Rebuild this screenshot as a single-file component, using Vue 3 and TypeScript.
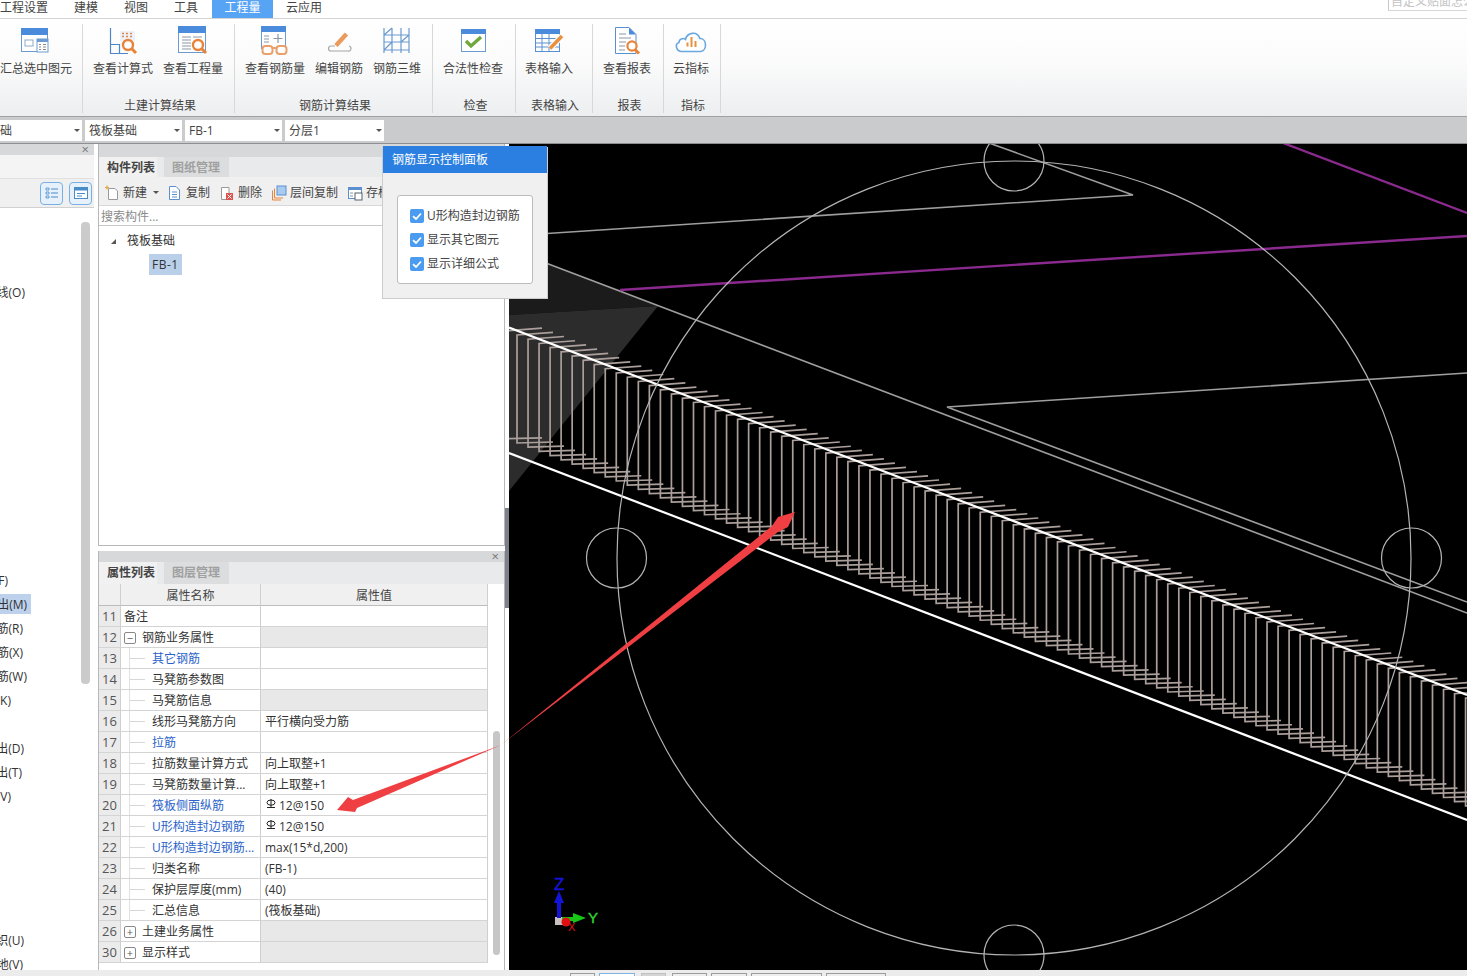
<script setup lang="ts">
import { computed } from 'vue'

const menus = [
  { label: '工程设置', w: 74 },
  { label: '建模', w: 50 },
  { label: '视图', w: 50 },
  { label: '工具', w: 38 },
  { label: '工程量', w: 74, active: true },
  { label: '云应用', w: 60 }
]

const combos = ['基础', '筏板基础', 'FB-1', '分层1']

const sideItems: Record<number, { text: string; end: number; on?: boolean }> = {
  3: { text: '线(O)', end: 25 },
  15: { text: 'F)', end: 8 },
  16: { text: '出(M)', end: 27, on: true },
  17: { text: '筋(R)', end: 23 },
  18: { text: '筋(X)', end: 23 },
  19: { text: '筋(W)', end: 27 },
  20: { text: 'K)', end: 11 },
  22: { text: '出(D)', end: 24 },
  23: { text: '出(T)', end: 22 },
  24: { text: 'V)', end: 11 },
  30: { text: '织(U)', end: 24 },
  31: { text: '地(V)', end: 23 }
}
const sideRows = computed(() => Array.from({ length: 32 }, (_, i) => sideItems[i] ?? null))

interface Row {
  no: number
  name: string
  value?: string
  kind?: 'plain' | 'open' | 'closed' | 'child'
  link?: boolean
  gray?: boolean
  bar?: boolean
}
const rows: Row[] = [
  { no: 11, name: '备注', kind: 'plain' },
  { no: 12, name: '钢筋业务属性', kind: 'open', gray: true },
  { no: 13, name: '其它钢筋', link: true },
  { no: 14, name: '马凳筋参数图' },
  { no: 15, name: '马凳筋信息', gray: true },
  { no: 16, name: '线形马凳筋方向', value: '平行横向受力筋' },
  { no: 17, name: '拉筋', link: true },
  { no: 18, name: '拉筋数量计算方式', value: '向上取整+1' },
  { no: 19, name: '马凳筋数量计算...', value: '向上取整+1' },
  { no: 20, name: '筏板侧面纵筋', value: '12@150', link: true, bar: true },
  { no: 21, name: 'U形构造封边钢筋', value: '12@150', link: true, bar: true },
  { no: 22, name: 'U形构造封边钢筋...', value: 'max(15*d,200)', link: true },
  { no: 23, name: '归类名称', value: '(FB-1)' },
  { no: 24, name: '保护层厚度(mm)', value: '(40)' },
  { no: 25, name: '汇总信息', value: '(筏板基础)' },
  { no: 26, name: '土建业务属性', kind: 'closed', gray: true },
  { no: 30, name: '显示样式', kind: 'closed', gray: true }
]

const checks = ['U形构造封边钢筋', '显示其它图元', '显示详细公式']

const stirrups = computed(() =>
  Array.from({ length: 90 }, (_, i) => {
    const x = 517 + 11.03 * (i - 1)
    const y = 335 + 4.22 * (i - 1)
    return `${x + 36},${y - 2.7} ${x},${y} ${x},${y + 108} ${x + 36},${y + 107}`
  })
)
</script>

<template>
  <div class="app">
    <header class="menubar">
      <div
        v-for="m in menus"
        :key="m.label"
        class="menu"
        :class="{ active: m.active }"
        :style="{ width: m.w + 'px' }"
      >{{ m.label }}</div>
      <div class="hint">自定义贴面怎么</div>
    </header>

    <section class="ribbon">
      <div class="group g1">
        <div class="btns">
          <div class="rbtn">
            <svg class="ric" viewBox="0 0 32 32">
              <rect x="1.5" y="2.5" width="26" height="23" fill="#fff" stroke="#6b9bd1" />
              <rect x="1" y="2" width="27" height="7" fill="#4a8bdc" />
              <rect x="5" y="14" width="8" height="6" fill="none" stroke="#8fa9c4" />
              <rect x="17" y="13" width="11" height="13" fill="#fff" stroke="#6b9bd1" />
              <rect x="17" y="13" width="11" height="3" fill="#6b9bd1" />
              <path d="M19 18.5h2m2 0h3M19 21h2m2 0h3M19 23.5h2m2 0h3" stroke="#8a8a8a" />
            </svg>
            <span>汇总选中图元</span>
          </div>
        </div>
        <div class="gtitle"></div>
      </div>

      <div class="group g2">
        <div class="btns">
          <div class="rbtn">
            <svg class="ric" viewBox="0 0 32 32">
              <path d="M3.5 2V27.5H21M3.5 18.5H12.5V27.5" fill="none" stroke="#4f86c6" stroke-width="1.2" />
              <rect x="13" y="5" width="15" height="10" fill="#eef2f8" />
              <path d="M15 7.5h2m2 0h2m2 0h2M15 10.5h2m2 0h2m2 0h2" stroke="#d9894f" stroke-width="1.6" />
              <circle cx="21" cy="19" r="5" fill="#fff" stroke="#e8833a" stroke-width="2.4" />
              <path d="M24.5 22.5L29 27" stroke="#e8833a" stroke-width="3" />
            </svg>
            <span>查看计算式</span>
          </div>
          <div class="rbtn">
            <svg class="ric" viewBox="0 0 32 32">
              <rect x="1.5" y="0.5" width="27" height="26" fill="#fff" stroke="#6b9bd1" />
              <rect x="1" y="0" width="28" height="7" fill="#4a8bdc" />
              <path d="M5 11h9m2 0h9M5 14h9M5 17h9M5 20h9M5 23h9" stroke="#8a97a6" />
              <circle cx="21" cy="19" r="5" fill="#fff" stroke="#e8833a" stroke-width="2.4" />
              <path d="M24.5 22.5L29 27" stroke="#e8833a" stroke-width="3" />
            </svg>
            <span>查看工程量</span>
          </div>
        </div>
        <div class="gtitle">土建计算结果</div>
      </div>

      <div class="group g3">
        <div class="btns">
          <div class="rbtn">
            <svg class="ric" viewBox="0 0 32 32">
              <rect x="2.5" y="0.5" width="24" height="22" fill="#fff" stroke="#6b9bd1" />
              <rect x="2" y="0" width="25" height="6" fill="#4a8bdc" />
              <path d="M5 10h5M5 13h5M5 16h5" stroke="#8a97a6" />
              <path d="M19 8v9M14.5 12.5h9" stroke="#8a97a6" stroke-width="1.2" />
              <rect x="3.5" y="20" width="10" height="8" rx="3" fill="#fff" stroke="#e9a06a" stroke-width="2" />
              <rect x="17.5" y="20" width="10" height="8" rx="3" fill="#fff" stroke="#e9a06a" stroke-width="2" />
              <path d="M13.5 22h4" stroke="#e9a06a" stroke-width="2" />
            </svg>
            <span>查看钢筋量</span>
          </div>
          <div class="rbtn">
            <svg class="ric" viewBox="0 0 32 32">
              <path d="M12 20H8a2.5 2.5 0 0 0 0 5h17a2.5 2.5 0 0 0 1-5" fill="none" stroke="#a2a6aa" stroke-width="1.2" />
              <path d="M13 19.5L23.5 8" stroke="#ea9a5c" stroke-width="4.4" />
            </svg>
            <span>编辑钢筋</span>
          </div>
          <div class="rbtn">
            <svg class="ric" viewBox="0 0 32 32">
              <path
                d="M3 2V27M11 2V27M20 2V27M28 2V27M3 9H28M3 16H28M3 24H28M11 2L3 9M28 9L20 16M11 16L3 24"
                fill="none"
                stroke="#6a9ad0"
                stroke-width="1.2"
              />
            </svg>
            <span>钢筋三维</span>
          </div>
        </div>
        <div class="gtitle">钢筋计算结果</div>
      </div>

      <div class="group g4">
        <div class="btns">
          <div class="rbtn">
            <svg class="ric" viewBox="0 0 32 32">
              <rect x="4.5" y="3.5" width="24" height="22" fill="#fff" stroke="#6b9bd1" />
              <rect x="4" y="3" width="25" height="5" fill="#4a8bdc" />
              <path d="M9 15L14 20L24 11" fill="none" stroke="#6fa83c" stroke-width="3.4" />
            </svg>
            <span>合法性检查</span>
          </div>
        </div>
        <div class="gtitle">检查</div>
      </div>

      <div class="group g5">
        <div class="btns">
          <div class="rbtn">
            <svg class="ric" viewBox="0 0 32 32">
              <rect x="2.5" y="3.5" width="24" height="22" fill="#fff" stroke="#5b8fcf" />
              <rect x="2" y="3" width="25" height="5" fill="#4a8bdc" />
              <path d="M3 12.5H26M3 17H26M3 21H26M9 8V25M16 8V25" stroke="#5b8fcf" />
              <path d="M17 22.5L29 10" stroke="#fff" stroke-width="6" />
              <path d="M17 22.5L29 10" stroke="#e9913f" stroke-width="3.6" />
            </svg>
            <span>表格输入</span>
          </div>
        </div>
        <div class="gtitle">表格输入</div>
      </div>

      <div class="group g6">
        <div class="btns">
          <div class="rbtn">
            <svg class="ric" viewBox="0 0 32 32">
              <path d="M4.5 1.5H18L25 8.5V27.5H4.5Z" fill="#fff" stroke="#5b8fcf" />
              <path d="M18 1.5L25 8.5H18Z" fill="#4a8bdc" />
              <path d="M8 8h7M8 12h12M8 16h7M8 20h6M8 24h6" stroke="#8a97a6" />
              <circle cx="21" cy="20" r="4.6" fill="#fff" stroke="#e8833a" stroke-width="2.2" />
              <path d="M24 23.5L28 27.5" stroke="#e8833a" stroke-width="3" />
            </svg>
            <span>查看报表</span>
          </div>
        </div>
        <div class="gtitle">报表</div>
      </div>

      <div class="group g7">
        <div class="btns">
          <div class="rbtn">
            <svg class="ric" viewBox="0 0 36 32">
              <path
                d="M9 25.5C3 25.5 1.5 18 6 16.5C6 13 10 11.5 12.5 13.5C14 6.5 24 4.5 27 12.5C34 12.5 34.5 24.5 27.5 25.5Z"
                fill="#fff"
                stroke="#6aa6e0"
                stroke-width="1.6"
              />
              <path d="M14.5 20.5v-4M18.5 21v-10M22.5 21v-6" stroke="#e9913f" stroke-width="2" />
            </svg>
            <span>云指标</span>
          </div>
        </div>
        <div class="gtitle">指标</div>
      </div>
    </section>

    <div class="combobar">
      <div v-for="(c, i) in combos" :key="c" class="combo" :class="'c' + i">
        <span class="ctext">{{ c }}</span>
        <i class="caret"></i>
      </div>
    </div>

    <main class="workspace">
      <aside class="side">
        <div class="strip"><span class="close">×</span></div>
        <div class="sidegap"></div>
        <div class="sidetools">
          <button class="toolbtn">
            <svg viewBox="0 0 16 16" width="16" height="16">
              <path d="M2 3h3v2H2zM2 7h3v2H2zM2 11h3v2H2z" fill="none" stroke="#4a8bc9" stroke-width=".8" />
              <path d="M7 4h7M7 8h7M7 12h7" stroke="#4a8bc9" />
            </svg>
          </button>
          <button class="toolbtn">
            <svg viewBox="0 0 16 16" width="16" height="16">
              <rect x="1.5" y="2.5" width="13" height="11" fill="#fff" stroke="#4a8bc9" />
              <rect x="1" y="2" width="14" height="3.5" fill="#4a8bc9" />
              <path d="M4 8.5h8M4 11h5" stroke="#4a8bc9" />
            </svg>
          </button>
        </div>
        <div class="sidebody">
          <ul class="sidelist">
            <li v-for="(r, i) in sideRows" :key="i" class="sideitem">
              <span
                v-if="r"
                class="sidelabel"
                :class="{ on: r.on }"
                :style="{ width: r.end + 4 + 'px' }"
              >{{ r.text }}</span>
            </li>
          </ul>
          <div class="sidetrack"><div class="sidethumb"></div></div>
        </div>
      </aside>

      <section class="center">
        <div class="panel upper">
          <div class="strip short"></div>
          <div class="tabs">
            <div class="tab on">构件列表</div>
            <div class="tab">图纸管理</div>
          </div>
          <div class="toolbar">
            <div class="tool">
              <svg viewBox="0 0 16 16" width="16" height="16">
                <path d="M4.5 3.5H11L13.5 6V14.5H4.5Z" fill="#fff" stroke="#9a9a9a" />
                <path d="M1 2.5h4M3 .5v4" stroke="#e3a63a" stroke-width="1.2" />
              </svg>
              <span>新建</span>
              <i class="caret small"></i>
            </div>
            <div class="tool">
              <svg viewBox="0 0 16 16" width="16" height="16">
                <path d="M2.5 1.5H9L12.5 5V14.5H2.5Z" fill="#fff" stroke="#5b8fcf" />
                <path d="M5 7h5M5 9.5h5M5 12h5" stroke="#5b8fcf" />
              </svg>
              <span>复制</span>
            </div>
            <div class="tool">
              <svg viewBox="0 0 16 16" width="16" height="16">
                <path d="M2.5 2.5H10V14.5H2.5Z" fill="#fff" stroke="#9a9a9a" />
                <rect x="7" y="8" width="7" height="7" fill="#d9534f" />
                <path d="M8.5 9.5l4 4m0-4l-4 4" stroke="#fff" />
              </svg>
              <span>删除</span>
            </div>
            <div class="tool">
              <svg viewBox="0 0 16 16" width="16" height="16">
                <path d="M1.5 5.5V15H10" fill="none" stroke="#e8833a" />
                <path d="M3.5 3.5V13H12" fill="none" stroke="#e8833a" />
                <rect x="6" y="1" width="9" height="9" fill="#a9cbef" stroke="#5b8fcf" />
              </svg>
              <span>层间复制</span>
            </div>
            <div class="tool">
              <svg viewBox="0 0 16 16" width="16" height="16">
                <rect x="1.5" y="2.5" width="13" height="11" fill="#fff" stroke="#5b8fcf" />
                <rect x="1" y="2" width="14" height="3" fill="#5b8fcf" />
                <rect x="8" y="8" width="7" height="7" fill="#fff" stroke="#52606d" />
                <path d="M3 8h3M3 11h3" stroke="#8a97a6" />
              </svg>
              <span>存档</span>
            </div>
          </div>
          <div class="search">搜索构件...</div>
          <div class="tree">
            <div class="treeroot"><i class="treearrow"></i><span>筏板基础</span></div>
            <div class="treeleaf"><span>FB-1</span></div>
          </div>
        </div>

        <div class="panel lower">
          <div class="strip lowstrip"><span class="close">×</span></div>
          <div class="tabs">
            <div class="tab on">属性列表</div>
            <div class="tab">图层管理</div>
          </div>
          <div class="proparea">
            <div class="proptable">
              <div class="phead corner"></div>
              <div class="phead">属性名称</div>
              <div class="phead">属性值</div>
              <template v-for="r in rows" :key="r.no">
                <div class="pno">{{ r.no }}</div>
                <div class="pname" :class="{ link: r.link }">
                  <template v-if="r.kind === 'plain'">
                    <span class="plain">{{ r.name }}</span>
                  </template>
                  <template v-else-if="r.kind === 'open' || r.kind === 'closed'">
                    <i class="toggle">{{ r.kind === 'open' ? '−' : '+' }}</i>
                    <span>{{ r.name }}</span>
                  </template>
                  <template v-else>
                    <i class="branch"></i>
                    <span>{{ r.name }}</span>
                  </template>
                </div>
                <div class="pval" :class="{ gray: r.gray }">
                  <svg v-if="r.bar" class="rebar" viewBox="0 0 10 10" width="10" height="10">
                    <ellipse cx="5" cy="3.6" rx="4" ry="2.6" fill="none" stroke="#222" />
                    <path d="M5 0V8M1 8.5H9" stroke="#222" />
                  </svg>
                  <span>{{ r.value }}</span>
                </div>
              </template>
            </div>
            <div class="proptrack"><div class="propthumb"></div></div>
          </div>
        </div>
      </section>

      <div class="splitter"></div>

      <div class="canvas">
        <svg class="scene" viewBox="509 144 958 826" width="958" height="826">
          <polygon points="509,249 620,290 658,306 509,315" fill="#1b1b1b" />
          <polygon points="509,315 658,306 509,491" fill="#2c2c2c" />

          <g fill="none" stroke="#ab9f9b" stroke-width="1.7">
            <polyline v-for="(p, i) in stirrups" :key="i" :points="p" />
          </g>

          <g fill="none" stroke="#9e9e9e" stroke-width="1.6">
            <path d="M509 249L1467 613" />
            <path d="M1467 373L947 407L1467 602" />
            <path d="M989 143L1133 195L509 236" />
          </g>
          <g fill="none" stroke="#8a2a8e" stroke-width="2.4">
            <path d="M620 290L1467 236" />
            <path d="M1283 143L1467 213" />
          </g>
          <g fill="none" stroke="#fff" stroke-width="2.2">
            <path d="M509 327.5L1467 695" />
            <path d="M509 453L1467 820" />
          </g>
          <g fill="none" stroke="#b4b4b4" stroke-width="1.2">
            <circle cx="1014" cy="558" r="397" />
            <circle cx="1014" cy="161" r="30" />
            <circle cx="1014" cy="955" r="30" />
            <circle cx="616.5" cy="558" r="30" />
            <circle cx="1411.5" cy="558" r="30" />
          </g>

          <g class="axes">
            <rect x="555" y="917" width="8" height="8" fill="#c9c0c0" />
            <path d="M559 918V898" stroke="#1414d8" stroke-width="4" />
            <polygon points="559,891 554,903 564,903" fill="#1414d8" />
            <text x="554" y="890" class="ax big" fill="#1414d8" stroke="#1414d8" stroke-width=".4">Z</text>
            <path d="M562 919H578" stroke="#16c716" stroke-width="4" />
            <polygon points="586,918 573,913 573,923" fill="#16c716" />
            <text x="588" y="923" class="ax" fill="#2fd32f" stroke="#2fd32f" stroke-width=".4">Y</text>
            <circle cx="566" cy="922" r="4.5" fill="#e01010" />
            <text x="568" y="931" class="ax sm" fill="#e01010">X</text>
          </g>
        </svg>
      </div>
    </main>

    <footer class="statusbar">
      <i class="sb w25"></i>
      <i class="sb w36 cur"></i>
      <i class="sb w25 fill"></i>
      <i class="sb w35"></i>
      <i class="sb w36b"></i>
      <i class="sb w71"></i>
      <i class="sb w60"></i>
    </footer>

    <div class="popover">
      <div class="poptitle">钢筋显示控制面板</div>
      <div class="popbody">
        <div class="popbox">
          <label v-for="c in checks" :key="c" class="check">
            <i class="tick">
              <svg viewBox="0 0 14 14" width="14" height="14">
                <path d="M3 7.2L6 10L11 4.5" fill="none" stroke="#fff" stroke-width="1.8" />
              </svg>
            </i>
            <span>{{ c }}</span>
          </label>
        </div>
      </div>
    </div>

    <svg class="annot" viewBox="0 0 1467 976" width="1467" height="976">
      <polygon points="501,745 772,526 778,517 795,512 788,527 778,532" fill="#ef3f42" />
      <polygon points="501,745 353,800 348,797 337,810 355,812 357,808" fill="#ef3f42" />
    </svg>
  </div>
</template>

<style scoped>
.app {
  position: relative;
  width: 1467px;
  height: 976px;
  overflow: hidden;
  display: flex;
  flex-direction: column;
  background: #fff;
  font-family: "Open Sans", "Noto Sans CJK SC", sans-serif;
  font-size: 12px;
  line-height: 16px;
  color: #333;
}

.menubar {
  height: 18px;
  flex: none;
  display: flex;
  background: #fff;
  border-bottom: 1px solid #d4d4d4;
  overflow: hidden;
  position: relative;
}
.menu {
  flex: none;
  height: 18px;
  line-height: 16px;
  color: #444;
  white-space: nowrap;
}
.menu.active {
  background: #57a3f4;
  color: #fff;
  text-align: center;
  width: 61px !important;
  margin-right: 13px;
}
.hint {
  position: absolute;
  right: 0;
  top: -6px;
  width: 76px;
  height: 16px;
  border-left: 1px solid #c8c8c8;
  border-bottom: 1px solid #d8d8d8;
  padding-left: 2px;
  color: #c4c4c4;
  white-space: nowrap;
  overflow: hidden;
}

.ribbon {
  height: 97px;
  flex: none;
  display: flex;
  background: linear-gradient(#fff 0, #fbfbfb 45%, #eceef0 100%);
}
.group {
  flex: none;
  height: 96px;
  display: flex;
  flex-direction: column;
  justify-content: space-between;
  padding-top: 7px;
  padding-bottom: 1px;
  box-sizing: border-box;
  position: relative;
}
.group::after {
  content: "";
  position: absolute;
  right: 0;
  top: 5px;
  bottom: 2px;
  width: 1px;
  background: #d6d8da;
}
.g1 { width: 83px; }
.g2 { width: 152px; padding-left: 10px; }
.g3 { width: 198px; padding-left: 10px; }
.g4 { width: 83px; padding-left: 10px; }
.g5 { width: 77px; padding-left: 9px; }
.g6 { width: 71px; padding-left: 10px; }
.g7 { width: 57px; padding-left: 9px; }
.btns {
  display: flex;
  gap: 10px;
}
.rbtn {
  display: flex;
  flex-direction: column;
  align-items: center;
  white-space: nowrap;
  color: #444;
}
.ric {
  width: 32px;
  height: 32px;
  margin-bottom: 3px;
  display: block;
}
.g7 .ric { width: 36px; }
.gtitle {
  height: 16px;
  text-align: center;
  color: #444;
  margin-left: -8px;
}
.g1 .gtitle { margin-left: 0; }

.combobar {
  height: 28px;
  flex: none;
  box-sizing: border-box;
  display: flex;
  gap: 3px;
  padding-top: 3px;
  background: #c9cbcd;
  border-top: 1px solid #9fa1a3;
  border-bottom: 1px solid #8d8f91;
}
.combo {
  height: 21px;
  flex: none;
  width: 97px;
  background: #fff;
  display: flex;
  align-items: center;
  justify-content: space-between;
  padding: 0 2px 0 4px;
  box-sizing: border-box;
  overflow: hidden;
  color: #444;
}
.c0 { width: 82px; }
.c0 .ctext { margin-left: -16px; }
.c3 { width: 99px; }
.caret {
  width: 0;
  height: 0;
  border-left: 3px solid transparent;
  border-right: 3px solid transparent;
  border-top: 3px solid #555;
  flex: none;
}

.workspace {
  flex: none;
  height: 826px;
  display: flex;
  background: #fff;
}

.strip {
  background: #d6d8da;
  height: 11px;
  position: relative;
}
.close {
  position: absolute;
  right: 5px;
  top: -2px;
  color: #777;
  font-size: 13px;
  line-height: 14px;
}

.side {
  width: 94px;
  flex: none;
  display: flex;
  flex-direction: column;
  background: #fff;
}
.sidegap {
  height: 23px;
  background: #f4f4f4;
}
.sidetools {
  height: 28px;
  display: flex;
  gap: 6px;
  justify-content: flex-end;
  align-items: center;
  padding-right: 2px;
  background: #f0f0f0;
  border-top: 1px solid #e0e0e0;
  border-bottom: 1px solid #d0d0d0;
}
.toolbtn {
  width: 23px;
  height: 23px;
  padding: 0;
  display: flex;
  align-items: center;
  justify-content: center;
  border: 1px solid #78b0e4;
  border-radius: 4px;
  background: #e6f1fb;
}
.sidebody {
  flex: 1;
  min-height: 0;
  display: flex;
  overflow: hidden;
}
.sidelist {
  list-style: none;
  margin: 0;
  padding: 0;
  width: 81px;
  flex: none;
}
.sideitem {
  height: 24px;
  display: flex;
  align-items: center;
}
.sidelabel {
  display: flex;
  justify-content: flex-end;
  box-sizing: border-box;
  padding-right: 4px;
  height: 20px;
  line-height: 22px;
  white-space: nowrap;
  overflow: hidden;
  font-size: 12px;
  color: #333;
}
.sidelabel.on { background: #bdd1ec; }
.sidetrack {
  width: 9px;
  flex: none;
  padding-top: 14px;
}
.sidethumb {
  height: 462px;
  background: #cbcbcb;
  border-radius: 4px;
}

.center {
  width: 407px;
  flex: none;
  margin-left: 4px;
  display: flex;
  flex-direction: column;
  box-sizing: border-box;
}
.panel {
  border-left: 1px solid #b5b7b9;
  border-right: 1px solid #b5b7b9;
  display: flex;
  flex-direction: column;
}
.upper {
  height: 402px;
  flex: none;
  border-bottom: 1px solid #b5b7b9;
  box-sizing: border-box;
}
.short { height: 13px; }
.tabs {
  height: 20px;
  flex: none;
  display: flex;
  background: #e9eaeb;
}
.lower .tabs { height: 22px; }
.tab {
  line-height: 21px;
  color: #a0a0a0;
  background: #dcddde;
  font-weight: 700;
  width: 65px;
  padding-left: 8px;
  box-sizing: border-box;
  margin-left: 7px;
}
.tab.on {
  background: #f1f1f1;
  color: #444;
  margin-left: 0;
  width: 58px;
}
.toolbar {
  height: 29px;
  flex: none;
  background: #f0f0f0;
  display: flex;
  align-items: center;
  padding: 3px 0 0 5px;
  gap: 9px;
  white-space: nowrap;
  overflow: hidden;
  border-bottom: 1px solid #d8d8d8;
  box-sizing: border-box;
}
.tool {
  display: flex;
  align-items: center;
  gap: 3px;
  color: #444;
  flex: none;
}
.caret.small {
  margin-left: 3px;
  margin-right: -1px;
}
.search {
  height: 20px;
  flex: none;
  box-sizing: border-box;
  border-bottom: 1px solid #c8c8c8;
  padding-left: 2px;
  color: #8a8a8a;
  line-height: 22px;
}
.tree {
  flex: 1;
  background: #fff;
  padding-top: 5px;
}
.treeroot {
  display: flex;
  align-items: center;
  height: 20px;
  padding-left: 12px;
  gap: 11px;
  color: #333;
}
.treearrow {
  width: 0;
  height: 0;
  border-bottom: 5px solid #555;
  border-left: 5px solid transparent;
}
.treeleaf {
  padding-left: 50px;
  height: 21px;
  margin-top: 3px;
}
.treeleaf span {
  display: inline-block;
  height: 21px;
  line-height: 21px;
  padding-left: 3px;
  background: #b9cfea;
  color: #333;
  width: 33px;
  box-sizing: border-box;
  letter-spacing: .5px;
  white-space: nowrap;
}
.lower {
  margin-top: 5px;
  flex: 1;
  min-height: 0;
}
.lowstrip { height: 11px; }
.proparea {
  flex: 1;
  min-height: 0;
  display: flex;
  background: #fff;
}
.proptable {
  width: 389px;
  flex: none;
  display: grid;
  grid-template-columns: 22px 140px 227px;
  grid-auto-rows: 21px;
  align-content: start;
}
.phead {
  background: #f0f0f0;
  border-right: 1px solid #cfcfcf;
  border-bottom: 1px solid #bdbdbd;
  text-align: center;
  line-height: 23px;
  color: #444;
  height: 22px;
  box-sizing: border-box;
}
.pno, .pname, .pval {
  box-sizing: border-box;
  border-bottom: 1px solid #d4d4d4;
  border-right: 1px solid #cfcfcf;
  display: flex;
  align-items: center;
  white-space: nowrap;
  overflow: hidden;
  height: 21px;
  position: relative;
  top: 1px;
  color: #333;
}
.pname, .pval { line-height: 18px; padding-top: 1px; }
.pno {
  background: #ebebeb;
  justify-content: center;
  color: #555;
  font-size: 13px;
}
.pname { padding-left: 8px; }
.pname.link { color: #2a63c9; }
.plain { margin-left: -5px; }
.toggle {
  width: 10px;
  height: 10px;
  flex: none;
  border: 1px solid #888;
  border-radius: 2px;
  margin-right: 6px;
  margin-left: -5px;
  font-style: normal;
  text-align: center;
  line-height: 10px;
  font-size: 11px;
  color: #555;
}
.branch {
  width: 16px;
  flex: none;
  height: 21px;
  margin: -1px 7px 0 0;
  border-left: 1px solid #e0e0e0;
  box-sizing: border-box;
  position: relative;
}
.branch::after {
  content: "";
  position: absolute;
  left: 0;
  top: 10px;
  right: 0;
  border-top: 1px solid #d8d8d8;
}
.pval {
  padding-left: 4px;
}
.pval.gray { background: #e8e8e8; }
.rebar {
  margin: -4px 3px 0 1px;
  flex: none;
}
.proptrack {
  flex: 1;
  padding: 147px 4px 0 5px;
  position: relative;
}
.propthumb {
  height: 224px;
  background: #c6c6c6;
  border-radius: 4px;
}

.splitter {
  width: 4px;
  flex: none;
  background: linear-gradient(#fff 0 364px, #7b8089 364px 464px, #fff 464px);
}
.canvas {
  width: 958px;
  flex: none;
  background: #000;
  overflow: hidden;
}
.scene { display: block; }
.ax {
  font-family: "Liberation Sans", sans-serif;
  font-size: 15px;
}
.ax.big { font-size: 17px; }
.ax.sm { font-size: 11px; }

.statusbar {
  flex: 1;
  background: #ececec;
  display: flex;
  align-items: flex-start;
  padding: 3px 0 0 570px;
  gap: 4px;
}
.sb {
  height: 6px;
  box-sizing: border-box;
  border: 1px solid #9c9c9c;
  border-bottom: 0;
  background: #eee;
}
.w25 { width: 25px; }
.w36 { width: 36px; }
.w35 { width: 35px; margin-left: 2px; }
.w36b { width: 36px; }
.w71 { width: 71px; }
.w60 { width: 60px; }
.sb.cur { border-color: #7fb2e5; background: #fff; }
.sb.fill { background: #d4d4d4; border-color: #c0c0c0; margin-left: 2px; }

.popover {
  position: absolute;
  left: 383px;
  top: 146px;
  width: 164px;
  height: 152px;
  display: flex;
  flex-direction: column;
  box-shadow: 1px 1px 0 #ccc, -1px 1px 0 #ccc;
}
.poptitle {
  height: 27px;
  flex: none;
  background: #2b7fe0;
  color: #fff;
  padding-left: 9px;
  line-height: 27px;
}
.popbody {
  flex: 1;
  background: #f0f0f0;
  padding: 22px 14px 14px;
}
.popbox {
  height: 89px;
  box-sizing: border-box;
  background: #fff;
  border: 1px solid #bcbcbc;
  border-radius: 3px;
  padding: 10px 0 0 12px;
  display: flex;
  flex-direction: column;
  gap: 4px;
}
.check {
  display: flex;
  align-items: center;
  gap: 3px;
  height: 20px;
  color: #444;
  white-space: nowrap;
}
.tick {
  width: 14px;
  height: 14px;
  background: #4b9bf0;
  border-radius: 2px;
  flex: none;
  display: block;
}
.tick svg { display: block; }

.annot {
  position: absolute;
  left: 0;
  top: 0;
  pointer-events: none;
}
</style>

<style>
html, body {
  margin: 0;
  padding: 0;
  background: #fff;
  overflow: hidden;
}
</style>
